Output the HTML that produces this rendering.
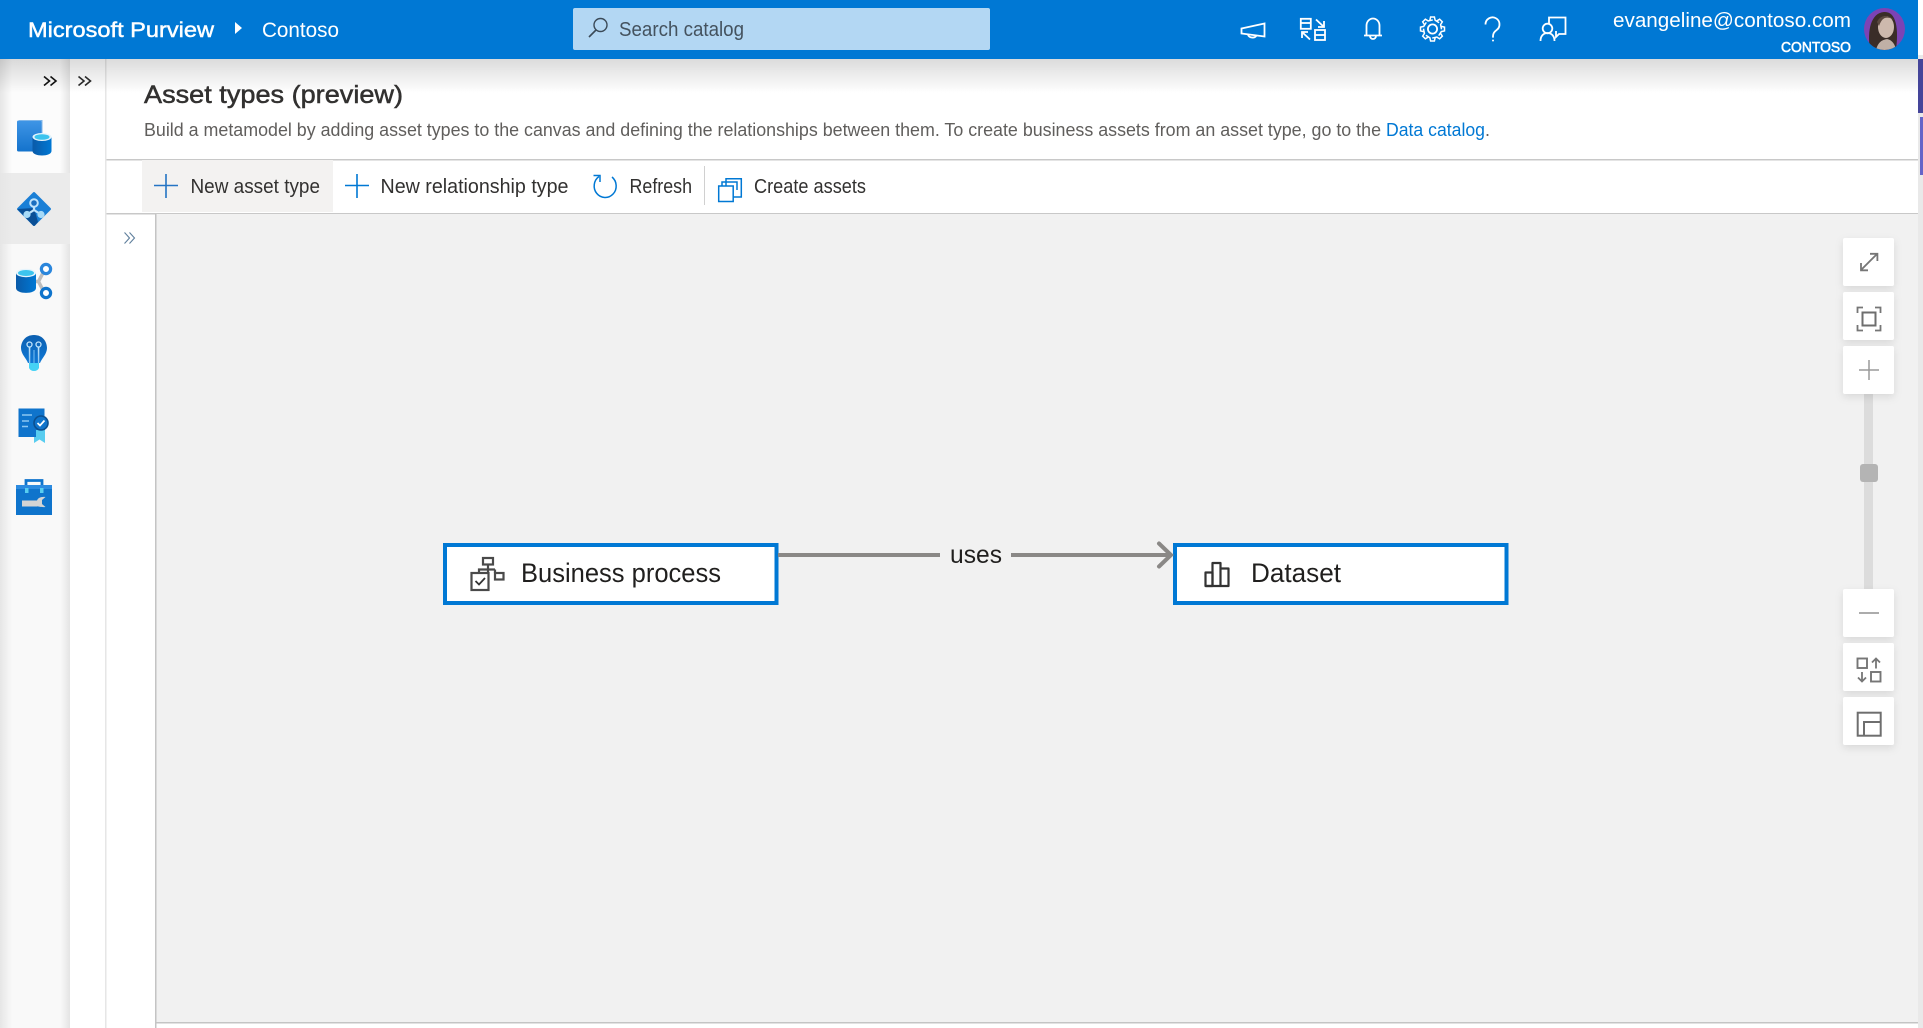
<!DOCTYPE html>
<html lang="en"><head><meta charset="utf-8"><title>Asset types (preview)</title>
<style>
html,body{margin:0;padding:0;background:#fff;overflow:hidden}
svg{display:block}
text{font-family:"Liberation Sans",Arial,sans-serif}
.sb{stroke:currentColor;stroke-width:.45px}
</style></head><body>
<svg width="1923" height="1028" viewBox="0 0 1923 1028" xmlns="http://www.w3.org/2000/svg">
<defs>
<linearGradient id="sh" x1="0" y1="0" x2="0" y2="1"><stop offset="0" stop-color="#000" stop-opacity=".14"/><stop offset="1" stop-color="#000" stop-opacity="0"/></linearGradient>
<linearGradient id="ll" x1="0" y1="0" x2="1" y2="0"><stop offset="0" stop-color="#e6e6e6"/><stop offset="1" stop-color="#e6e6e6" stop-opacity="0"/></linearGradient>
<linearGradient id="lr" x1="0" y1="0" x2="1" y2="0"><stop offset="0" stop-color="#e4e4e4" stop-opacity="0"/><stop offset="1" stop-color="#e4e4e4"/></linearGradient>
<linearGradient id="bl" x1="0" y1="0" x2="0" y2="1"><stop offset="0" stop-color="#3f95e6"/><stop offset="1" stop-color="#1473cc"/></linearGradient>
<linearGradient id="db" x1="0" y1="0" x2="1" y2="0"><stop offset="0" stop-color="#0a5aa8"/><stop offset="1" stop-color="#0078d4"/></linearGradient>
<linearGradient id="bulb" x1="0" y1="0" x2="0" y2="1"><stop offset="0" stop-color="#0c5fb0"/><stop offset="1" stop-color="#0f79d6"/></linearGradient>
<linearGradient id="wl" x1="0" y1="0" x2="0" y2="1"><stop offset="0" stop-color="#bfe3fb"/><stop offset="1" stop-color="#bfe3fb" stop-opacity=".2"/></linearGradient>
<filter id="bs" x="-30%" y="-30%" width="160%" height="170%"><feDropShadow dx="0" dy="3" stdDeviation="4" flood-color="#000" flood-opacity=".1"/></filter>
<path id="tooth" d="M-2.6 -8.8 L-1.9 -12 H1.9 L2.6 -8.8 L6.6 -6.2" fill="none" stroke="#fff" stroke-width="1.5"/>
</defs>

<rect width="1923" height="1028" fill="#fff"/>

<!-- left rail -->
<rect x="0" y="59" width="70" height="969" fill="#f9f9f9"/>
<rect x="0" y="59" width="70" height="114" fill="#fcfcfc"/>
<rect x="0" y="173" width="70" height="71" fill="#ebebeb"/>
<rect x="0" y="59" width="12" height="969" fill="url(#ll)"/>
<rect x="60" y="59" width="10" height="114" fill="url(#lr)"/>
<rect x="60" y="244" width="10" height="784" fill="url(#lr)"/>

<!-- column separator and canvas -->
<rect x="105" y="59" width="1.5" height="969" fill="#e6e6e6"/>
<rect x="106.5" y="213" width="1811.5" height="1.5" fill="#c8c8c8"/>
<rect x="106.5" y="159" width="1811.5" height="1.5" fill="#c8c8c8"/>
<rect x="156" y="214" width="1762" height="808" fill="#f1f1f1"/>
<rect x="155" y="214" width="1.5" height="814" fill="#c4c4c4"/>
<rect x="155" y="1022" width="1763" height="1.5" fill="#c4c4c4"/>

<!-- header shadow -->
<rect x="0" y="59" width="1918" height="34" fill="url(#sh)"/>

<!-- scrollbar -->
<rect x="1918" y="55" width="5" height="973" fill="#e9e9e9"/>
<rect x="1918" y="59" width="5" height="54" fill="#45459a"/>
<rect x="1920" y="117" width="3" height="58" fill="#6464c8"/>

<!-- header -->
<rect width="1918" height="59" fill="#0078d4"/>
<rect x="1918" width="5" height="55" fill="#fff"/>
<text x="28" y="37" font-size="21" fill="#fff" class="sb" textLength="186" lengthAdjust="spacingAndGlyphs" style="color:#fff">Microsoft Purview</text>
<path d="M235 22 L242 28 L235 34 Z" fill="#fff"/>
<text x="262" y="37" font-size="21" fill="#fff" textLength="77" lengthAdjust="spacingAndGlyphs">Contoso</text>
<rect x="573" y="8" width="417" height="42" rx="2" fill="#b3d7f3"/>
<circle cx="600.5" cy="25" r="6.5" fill="none" stroke="#3b4a57" stroke-width="1.4"/>
<path d="M596 30 L589 37" stroke="#3b4a57" stroke-width="1.6"/>
<text x="619" y="36" font-size="20" fill="#44525e" textLength="125" lengthAdjust="spacingAndGlyphs">Search catalog</text>

<g fill="none" stroke="#fff" stroke-width="1.8">
<path d="M1241.5 28.5 L1264.5 23.5 V36.5 L1241.5 33.5 Z"/><path d="M1248 34.5 a4.5 3.6 0 0 0 8.5 1"/>
<rect x="1300.8" y="18.8" width="10" height="10"/><path d="M1300.8 23 H1310.8"/>
<rect x="1315" y="30" width="10" height="10"/><path d="M1315 35 H1325"/>
<path d="M1316 19.5 L1324 27 M1324 21 V27 H1318"/><path d="M1310 39.5 L1302 32 M1302 38 V32 H1308"/>
<path d="M1366.5 35 V25.5 a6.5 7 0 0 1 13 0 V35"/><path d="M1364 35.5 H1382"/><path d="M1370 36 a3 3 0 0 0 6 0"/>
<circle cx="1432.5" cy="29" r="4.6"/>
<path d="M1485.5 24.5 a7 7 0 1 1 11 5.6 c-2.5 1.8 -3.5 3.5 -3.5 6 v1.5"/>
<path d="M1549 24 V17.5 H1565.5 V34 H1559 L1556 37 V31"/>
<circle cx="1547.5" cy="28.5" r="4.8"/>
<path d="M1540.5 41 c0 -5 3 -8 7 -8 s7 3 7 8"/>
</g>
<circle cx="1493" cy="40.5" r="1" fill="#fff"/>
<g transform="translate(1432.5 29)">
<use href="#tooth"/><use href="#tooth" transform="rotate(45)"/><use href="#tooth" transform="rotate(90)"/><use href="#tooth" transform="rotate(135)"/><use href="#tooth" transform="rotate(180)"/><use href="#tooth" transform="rotate(225)"/><use href="#tooth" transform="rotate(270)"/><use href="#tooth" transform="rotate(315)"/>
</g>

<text x="1613" y="27" font-size="20" fill="#fff" textLength="238" lengthAdjust="spacingAndGlyphs">evangeline@contoso.com</text>
<text x="1781" y="52" font-size="15" fill="#fff" class="sb" textLength="70" lengthAdjust="spacingAndGlyphs" style="color:#fff;stroke-width:.55px">CONTOSO</text>
<clipPath id="av"><ellipse cx="1884.5" cy="29" rx="20.5" ry="21"/></clipPath>
<g clip-path="url(#av)">
<rect x="1864" y="8" width="41" height="42" fill="#7c43b5"/>
<path d="M1870 50 C1867 30 1871 13 1884 12 C1896 11 1899 28 1896 50 Z" fill="#3a2d28"/>
<ellipse cx="1886" cy="27" rx="8" ry="11" fill="#cdb9ad"/>
<path d="M1876 50 C1878 42 1882 40 1887 39 C1892 40 1895 44 1896 50 Z" fill="#c0b0a6"/>
<path d="M1877 22 C1880 15 1888 14 1894 20 L1890 18 C1885 17 1882 18 1879 26 Z" fill="#5a483f"/>
</g>

<!-- chevrons -->
<g fill="none" stroke="#111" stroke-width="1.6">
<path d="M44 76.5 L49.5 81 L44 85.5 M50.5 76.5 L56 81 L50.5 85.5"/>
<path d="M78.5 76.5 L84 81 L78.5 85.5 M85 76.5 L90.5 81 L85 85.5" stroke="#2a2a2a"/>
</g>
<path d="M124.5 232.5 L129.5 238 L124.5 243.5 M129.5 232.5 L134.5 238 L129.5 243.5" fill="none" stroke="#5f7f9c" stroke-width="1.1"/>

<!-- rail icons -->
<!-- catalog -->
<rect x="17" y="120.5" width="24.5" height="31" rx="1.5" fill="url(#bl)"/>
<path d="M19 120.5 H42 V134" fill="none" stroke="#7fb5e8" stroke-width="1"/>
<path d="M32.5 137 V151 C32.5 157 51.5 157 51.5 151 V137 Z" fill="url(#db)"/>
<ellipse cx="42" cy="137" rx="9.5" ry="4" fill="#e5f4fc"/><ellipse cx="42" cy="137" rx="7.5" ry="2.8" fill="#3cc4ee"/>
<!-- diamond -->
<path d="M33 192.5 Q34 191.5 35 192.5 L50.5 208 Q51.5 209 50.5 210 L35 225.5 Q34 226.5 33 225.5 L17.5 210 Q16.5 209 17.5 208 Z" fill="#1a7fd6"/>
<path d="M34 208 L17.2 209 L33 225.5 Q34 226.5 35 225.5 L38 222 Z" fill="#0a4f96"/>
<path d="M34 206 V210 L27 214.5 M34 210 L41 214.5" stroke="#bfe3fb" stroke-width="2.2" fill="none"/>
<circle cx="34" cy="203" r="3.8" fill="#1a6fc0" stroke="#bfe3fb" stroke-width="2"/>
<circle cx="27" cy="214.5" r="3.6" fill="#a6daf8"/><circle cx="41" cy="214.5" r="3.6" fill="#a6daf8"/>
<!-- data map -->
<path d="M44 271 L38.5 281.5 L44 292 M36 281.5 H39" fill="none" stroke="#bdbdbd" stroke-width="3.5"/>
<path d="M16 273 V288 C16 294.5 36 294.5 36 288 V273 Z" fill="url(#db)"/>
<ellipse cx="26" cy="273" rx="10" ry="4.2" fill="#e5f4fc"/><ellipse cx="26" cy="273" rx="8" ry="3" fill="#3cc4ee"/>
<circle cx="46" cy="269" r="4.6" fill="#fff" stroke="#2a86dc" stroke-width="3.2"/>
<circle cx="46" cy="293" r="4.6" fill="#fff" stroke="#0f74cc" stroke-width="3.2"/>
<!-- bulb -->
<path d="M34 335 C25 335 21 342 21 348 C21 354 26 358 28 363 H40 C42 358 47 354 47 348 C47 342 43 335 34 335 Z" fill="url(#bulb)"/>
<path d="M29.5 347 V363 M38.5 347 V363" stroke="url(#wl)" stroke-width="1.5" fill="none"/>
<rect x="29.2" y="347" width="1" height="16" fill="#bfe3fb" opacity=".8"/><rect x="38.2" y="347" width="1" height="16" fill="#bfe3fb" opacity=".8"/>
<rect x="33" y="350" width="2" height="13" fill="#5aa9e8" opacity=".7"/>
<circle cx="29.5" cy="344.5" r="2.5" fill="none" stroke="#bfe3fb" stroke-width="1.3"/><circle cx="38.5" cy="344.5" r="2.5" fill="none" stroke="#bfe3fb" stroke-width="1.3"/>
<path d="M29 363 H39 V368 Q37.5 371 34 371 Q30.5 371 29 368 Z" fill="#45d2f5"/>
<!-- cert -->
<path d="M34 430 H45 V443 L39.5 439.5 L34 443 Z" fill="#58cdf0"/>
<path d="M18.5 408.5 H44.5 V418 H45 V430 H36 V437 H18.5 Z" fill="#0f74cc"/>
<path d="M22 415 H32 M22 421 H29 M22 426.5 H28" stroke="#8cc7f2" stroke-width="1.6"/>
<circle cx="41" cy="423" r="7" fill="#0f74cc" stroke="#0b4f8f" stroke-width="1.6"/>
<path d="M37.5 423 L40 425.5 L44.5 420.5" fill="none" stroke="#fff" stroke-width="1.7"/>
<!-- toolbox -->
<path d="M26 485 V480.5 H42 V485" fill="none" stroke="#0f74cc" stroke-width="2.8"/>
<rect x="16" y="485" width="36" height="30" fill="#0f74cc"/>
<rect x="16" y="485" width="36" height="4" fill="#2c8be0"/>
<rect x="25" y="488" width="3.5" height="5" fill="#58cdf0"/><rect x="40" y="488" width="3.5" height="5" fill="#58cdf0"/>
<path d="M22 500.5 H37 C38 498 40.5 496.5 45.5 497 L42 500 V504 L45.5 507 C40.5 507.5 38 506 37 506.5 H22 Z" fill="#d4d4d4"/>

<!-- title -->
<text x="144" y="103" font-size="25" fill="#323130" class="sb" textLength="259" lengthAdjust="spacingAndGlyphs" style="color:#323130;stroke-width:.5px">Asset types (preview)</text>
<text x="144" y="136" font-size="18" fill="#605e5c" textLength="1237" lengthAdjust="spacingAndGlyphs">Build a metamodel by adding asset types to the canvas and defining the relationships between them. To create business assets from an asset type, go to the</text>
<text x="1386" y="136" font-size="18" fill="#0078d4" textLength="99" lengthAdjust="spacingAndGlyphs">Data catalog</text>
<text x="1485" y="136" font-size="18" fill="#605e5c">.</text>

<!-- toolbar -->
<rect x="142" y="160" width="191" height="52" fill="#f3f2f1"/>
<path d="M154 185.5 H178 M166 174 V198" stroke="#2474c4" stroke-width="1.6"/>
<text x="190.5" y="193" font-size="20" fill="#323130" textLength="129.5" lengthAdjust="spacingAndGlyphs">New asset type</text>
<path d="M345 185.5 H369 M357 174 V198" stroke="#0078d4" stroke-width="1.6"/>
<text x="380.5" y="193" font-size="20" fill="#323130" textLength="188" lengthAdjust="spacingAndGlyphs">New relationship type</text>
<path d="M612 177 A11 11.5 0 1 1 599 176.5" fill="none" stroke="#0078d4" stroke-width="1.5"/>
<path d="M593.5 175.5 H600 V182" fill="none" stroke="#0078d4" stroke-width="1.5"/>
<text x="629.5" y="193" font-size="20" fill="#323130" textLength="62.5" lengthAdjust="spacingAndGlyphs">Refresh</text>
<rect x="704" y="166" width="1" height="39" fill="#d0d0d0"/>
<g fill="none" stroke="#0078d4" stroke-width="1.5">
<path d="M726 186 V178.7 H741.3 V197 H733"/>
<path d="M722 186 V182 H737 V190"/>
<rect x="718.7" y="186" width="14.5" height="15.5" fill="#fff"/>
</g>
<text x="754" y="193" font-size="20" fill="#323130" textLength="112" lengthAdjust="spacingAndGlyphs">Create assets</text>

<!-- nodes -->
<rect x="445" y="545" width="331.5" height="58" fill="#fff" stroke="#0078d4" stroke-width="4"/>
<g fill="none" stroke="#4a4a4a" stroke-width="2.2">
<rect x="483" y="558" width="10" height="6.5"/>
<path d="M488 564.5 V573 M479 573 V569.5 H495 M495 573 V569.5"/>
<rect x="495" y="573" width="8.5" height="6.5"/>
<rect x="471.5" y="573" width="17" height="17"/>
</g>
<path d="M475.5 581 L479 584.5 L485 578" fill="none" stroke="#333" stroke-width="1.8"/>
<text x="521" y="582" font-size="27" fill="#201f1e" textLength="200" lengthAdjust="spacingAndGlyphs">Business process</text>

<rect x="1175" y="545" width="331.5" height="58" fill="#fff" stroke="#0078d4" stroke-width="4"/>
<g fill="none" stroke="#333" stroke-width="2.2" stroke-linejoin="round">
<path d="M1205.5 586 V572.5 H1212.5 V586 Z"/>
<path d="M1212.5 586 V563 H1220.5 V586"/>
<path d="M1220.5 568.5 H1228.5 V586 H1205.5"/>
</g>
<text x="1251" y="582" font-size="27" fill="#201f1e" textLength="90" lengthAdjust="spacingAndGlyphs">Dataset</text>

<!-- edge -->
<rect x="778" y="553" width="162" height="4" fill="#8a8886"/>
<rect x="1011" y="553" width="159" height="4" fill="#8a8886"/>
<path d="M1159 543.5 L1171 555 L1159 566.5" fill="none" stroke="#8a8886" stroke-width="4" stroke-linecap="round"/>
<text x="950" y="563" font-size="25" fill="#201f1e" textLength="52" lengthAdjust="spacingAndGlyphs">uses</text>

<!-- zoom controls -->
<rect x="1864" y="394" width="9" height="195" fill="#dcdcdc"/>
<rect x="1860" y="464" width="18" height="18" rx="3" fill="#b4b4b4"/>
<g fill="#fff" filter="url(#bs)">
<rect x="1843" y="238" width="51" height="48" rx="2"/>
<rect x="1843" y="292" width="51" height="48" rx="2"/>
<rect x="1843" y="346" width="51" height="48" rx="2"/>
<rect x="1843" y="589" width="51" height="48" rx="2"/>
<rect x="1843" y="643" width="51" height="48" rx="2"/>
<rect x="1843" y="697" width="51" height="48" rx="2"/>
</g>
<g fill="none" stroke="#767676" stroke-width="1.8">
<path d="M1861 270 L1877 254 M1870 253.8 H1877.4 V261 M1861 263 V270.3 H1868"/>
<path d="M1857.5 313 V307.5 H1863 M1875 307.5 H1880.5 V313 M1880.5 325 V330.5 H1875 M1863 330.5 H1857.5 V325"/>
<rect x="1862.5" y="312.5" width="13" height="13" stroke-width="2" stroke="#6e6e6e"/>
<path d="M1859 370 H1879 M1869 360 V380" stroke="#9a9a9a" stroke-width="1.5"/>
<path d="M1859 613 H1879" stroke="#a0a0a0" stroke-width="1.8"/>
<rect x="1857.5" y="658.5" width="9.5" height="9.5" stroke-width="1.9"/>
<rect x="1871" y="672" width="9.5" height="9.5" stroke-width="1.9"/>
<path d="M1876 668.5 V658.5 M1872 662.5 L1876 658.5 L1880 662.5"/>
<path d="M1862 672 V681.5 M1858 677.5 L1862 681.5 L1866 677.5"/>
<rect x="1857.7" y="712.7" width="23" height="23" stroke-width="2" stroke="#6e6e6e"/>
<path d="M1864 735.7 V722 H1880.7" stroke-width="2" stroke="#6e6e6e"/>
</g>
</svg>
</body></html>
